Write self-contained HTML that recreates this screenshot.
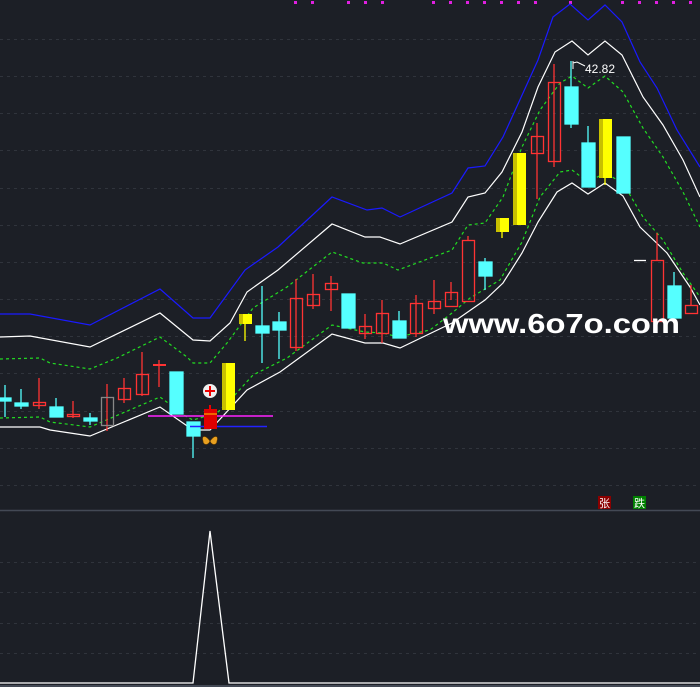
<!DOCTYPE html>
<html><head><meta charset="utf-8"><style>
html,body{margin:0;padding:0;background:#1c1f26;width:700px;height:687px;overflow:hidden}
svg{display:block}
</style></head><body>
<svg width="700" height="687" viewBox="0 0 700 687" xmlns="http://www.w3.org/2000/svg" font-family="Liberation Sans, sans-serif">
<rect width="700" height="687" fill="#1c1f26"/>
<g stroke="#30343c" stroke-width="1" stroke-dasharray="3,4">
<line x1="0" y1="39.5" x2="700" y2="39.5"/><line x1="0" y1="76.5" x2="700" y2="76.5"/><line x1="0" y1="113.5" x2="700" y2="113.5"/><line x1="0" y1="150.5" x2="700" y2="150.5"/><line x1="0" y1="188.5" x2="700" y2="188.5"/><line x1="0" y1="225.5" x2="700" y2="225.5"/><line x1="0" y1="262.5" x2="700" y2="262.5"/><line x1="0" y1="299.5" x2="700" y2="299.5"/><line x1="0" y1="336.5" x2="700" y2="336.5"/><line x1="0" y1="373.5" x2="700" y2="373.5"/><line x1="0" y1="411.5" x2="700" y2="411.5"/><line x1="0" y1="448.5" x2="700" y2="448.5"/><line x1="0" y1="485.5" x2="700" y2="485.5"/>
<line x1="0" y1="562.5" x2="700" y2="562.5"/><line x1="0" y1="592.5" x2="700" y2="592.5"/><line x1="0" y1="623.5" x2="700" y2="623.5"/><line x1="0" y1="653.5" x2="700" y2="653.5"/>
</g>
<line x1="0" y1="510.5" x2="700" y2="510.5" stroke="#434955" stroke-width="1.5"/>
<line x1="0" y1="686" x2="700" y2="686" stroke="#434955" stroke-width="2"/>
<g fill="#e020e0">
<rect x="294" y="1" width="3" height="3"/><rect x="311" y="1" width="3" height="3"/><rect x="347" y="1" width="3" height="3"/><rect x="364" y="1" width="3" height="3"/><rect x="381" y="1" width="3" height="3"/><rect x="432" y="1" width="3" height="3"/><rect x="449" y="1" width="3" height="3"/><rect x="466" y="1" width="3" height="3"/><rect x="483" y="1" width="3" height="3"/><rect x="500" y="1" width="3" height="3"/><rect x="517" y="1" width="3" height="3"/><rect x="534" y="1" width="3" height="3"/><rect x="569" y="1" width="3" height="3"/><rect x="621" y="1" width="3" height="3"/><rect x="638" y="1" width="3" height="3"/><rect x="655" y="1" width="3" height="3"/><rect x="672" y="1" width="3" height="3"/><rect x="689" y="1" width="3" height="3"/>
</g>
<g fill="none" stroke-width="1.2">
<polyline stroke="#1a1aff" points="0,314 30,314 90,325 160,289 193,318 210,318 245,270 278,247 332,197 367,210 382,208 400,217 452,193 468,168 485,166 503,137 538,60 553,17 570,4 588,20 605,5 622,22 640,62 657,88 677,130 700,167"/>
<polyline stroke="#ffffff" points="0,337 30,336 90,347 160,313 193,340 210,341 230,323 247,292 278,270 332,224 365,237 380,237 400,244 452,222 468,197 485,193 502,172 522,132 538,87 555,52 572,41 588,55 605,41 622,55 643,97 663,125 683,160 700,197"/>
<polyline stroke="#ffffff" points="0,427 40,427 50,430 90,436 160,407 193,430 210,430 247,390 280,372 332,334 365,343 383,343 400,348 452,323 485,300 503,283 522,253 538,222 557,192 572,183 588,194 605,183 623,196 640,227 667,253 690,287 700,305"/>
</g>
<g fill="none" stroke="#22dd22" stroke-width="1.2" stroke-dasharray="3,3">
<polyline points="0,359 40,358 50,363 90,369 117,358 160,337 187,357 193,363 210,363 227,343 253,308 287,287 332,252 363,263 383,263 398,270 452,250 468,225 485,223 503,197 522,147 540,110 560,83 572,76 588,88 605,76 623,92 643,128 663,157 683,192 700,227"/>
<polyline points="0,418 40,417 50,422 90,427 160,397 187,417 193,420 217,413 233,397 253,375 287,358 332,325 365,332 383,333 398,337 430,330 452,313 470,298 500,280 522,242 540,197 560,172 572,170 588,182 605,173 623,183 643,217 663,240 683,273 700,297"/>
</g>
<g stroke-width="1.3">
<g stroke="#55ffff" fill="#55ffff">
<line x1="5" y1="385" x2="5" y2="417"/><rect x="0" y="398" width="11" height="3"/>
<line x1="21" y1="389" x2="21" y2="409"/><rect x="15" y="403" width="13" height="3"/>
<line x1="56" y1="398" x2="56" y2="407"/><rect x="50" y="407" width="13" height="10"/>
<line x1="90" y1="413" x2="90" y2="425"/><rect x="84" y="418" width="13" height="3"/>
<rect x="170" y="372" width="13" height="42"/>
<line x1="193" y1="436" x2="193" y2="458"/><rect x="187" y="422" width="13" height="14"/>
<line x1="262" y1="286" x2="262" y2="363"/><rect x="256" y="326" width="13" height="7"/>
<line x1="279" y1="312" x2="279" y2="359"/><rect x="273" y="322" width="13" height="8"/>
<rect x="342" y="294" width="13" height="34"/>
<line x1="399" y1="311" x2="399" y2="321"/><rect x="393" y="321" width="13" height="17"/>
<line x1="485" y1="258" x2="485" y2="290"/><rect x="479" y="262" width="13" height="14"/>
<line x1="571" y1="61" x2="571" y2="128"/><rect x="565" y="87" width="13" height="37"/>
<line x1="588" y1="126" x2="588" y2="143"/><rect x="582" y="143" width="13" height="44"/>
<rect x="617" y="137" width="13" height="56"/>
<line x1="674" y1="272" x2="674" y2="286"/><rect x="668" y="286" width="13" height="32"/>
</g>
<g stroke="#ff3333" fill="none">
<line x1="39" y1="378" x2="39" y2="409"/><rect x="33.5" y="402.5" width="12" height="3"/>
<line x1="73" y1="401" x2="73" y2="418"/><rect x="67.5" y="414.5" width="12" height="2"/>
<line x1="107" y1="384" x2="107" y2="431"/><rect x="101.5" y="397.5" width="12" height="28" stroke="#888"/>
<line x1="124" y1="378" x2="124" y2="403"/><rect x="118.5" y="388.5" width="12" height="11"/>
<line x1="142" y1="352" x2="142" y2="396"/><rect x="136.5" y="374.5" width="12" height="20"/>
<line x1="159" y1="360" x2="159" y2="387"/><line x1="153" y1="365" x2="166" y2="365" stroke-width="2"/>
<line x1="296" y1="279" x2="296" y2="351"/><rect x="290.5" y="298.5" width="12" height="49"/>
<line x1="313" y1="274" x2="313" y2="309"/><rect x="307.5" y="294.5" width="12" height="11"/>
<line x1="331" y1="276" x2="331" y2="311"/><rect x="325.5" y="283.5" width="12" height="6"/>
<line x1="365" y1="314" x2="365" y2="339"/><rect x="359.5" y="326.5" width="12" height="7"/>
<line x1="382" y1="300" x2="382" y2="343"/><rect x="376.5" y="313.5" width="12" height="20"/>
<line x1="416" y1="295" x2="416" y2="337"/><rect x="410.5" y="303.5" width="12" height="30"/>
<line x1="434" y1="280" x2="434" y2="314"/><rect x="428.5" y="301.5" width="12" height="7"/>
<line x1="451" y1="282" x2="451" y2="300"/><rect x="445.5" y="292.5" width="12" height="14"/>
<line x1="468" y1="236" x2="468" y2="240"/><rect x="462.5" y="240.5" width="12" height="61"/>
<line x1="537" y1="123" x2="537" y2="199"/><rect x="531.5" y="136.5" width="12" height="17"/>
<line x1="554" y1="64" x2="554" y2="167"/><rect x="548.5" y="82.5" width="12" height="79"/>
<line x1="657" y1="233" x2="657" y2="260"/><rect x="651.5" y="260.5" width="12" height="61"/>
<line x1="691" y1="285" x2="691" y2="305"/><rect x="685.5" y="305.5" width="12" height="8"/>
</g>
<g stroke="none">
<rect x="222" y="363" width="13" height="47" fill="#ffff00"/><rect x="222" y="363" width="4" height="47" fill="#c8c000"/>
<line x1="245" y1="324" x2="245" y2="341" stroke="#ffff00"/><rect x="239" y="314" width="13" height="10" fill="#ffff00"/><rect x="239" y="314" width="4" height="10" fill="#c8c000"/>
<line x1="502" y1="232" x2="502" y2="238" stroke="#ffff00"/><rect x="496" y="218" width="13" height="14" fill="#ffff00"/><rect x="496" y="218" width="4" height="14" fill="#c8c000"/>
<rect x="513" y="153" width="13" height="72" fill="#ffff00"/><rect x="513" y="153" width="4" height="72" fill="#c8c000"/>
<line x1="605" y1="178" x2="605" y2="185" stroke="#ffff00"/><rect x="599" y="119" width="13" height="59" fill="#ffff00"/><rect x="599" y="119" width="4" height="59" fill="#c8c000"/>
</g>
</g>
<line x1="634" y1="260.5" x2="646" y2="260.5" stroke="#fff" stroke-width="1.3"/>
<line x1="148" y1="416" x2="273" y2="416" stroke="#ff22ff" stroke-width="1.5"/>
<line x1="190" y1="426.5" x2="267" y2="426.5" stroke="#2222ff" stroke-width="1.5"/>
<rect x="204" y="409" width="13" height="20" fill="#e00000"/><line x1="210" y1="405" x2="210" y2="409" stroke="#e00" stroke-width="2"/><line x1="204" y1="414" x2="217" y2="414" stroke="#ffcc00"/>
<circle cx="210" cy="391" r="7" fill="#eee"/><path d="M210 386v10M205 391h10" stroke="#e00" stroke-width="2"/>
<path d="M210 441 C205 434 201 436 203 441 C203 444 206 446 209 443 Z M210 441 C215 434 219 436 217 441 C217 444 214 446 211 443 Z" fill="#e8a020" stroke="#553300" stroke-width="0.6"/>
<path d="M573 61v8M573 63l4 -1 8 4" stroke="#fff" fill="none" stroke-width="1"/>
<text x="585" y="73" fill="#ffffff" font-size="12">42.82</text>
<text x="443" y="333" fill="#ffffff" font-size="28" font-weight="bold" textLength="237" lengthAdjust="spacingAndGlyphs">www.6o7o.com</text>
<rect x="598" y="496" width="13" height="13" fill="#8b0000"/><text x="604.5" y="507" fill="#fff" font-size="11" text-anchor="middle" font-family="Noto Sans CJK SC, sans-serif">张</text>
<rect x="633" y="496" width="13" height="13" fill="#008000"/><text x="639.5" y="507" fill="#fff" font-size="11" text-anchor="middle" font-family="Noto Sans CJK SC, sans-serif">跌</text>
<polyline points="0,683 193,683 210,531 229,683 700,683" fill="none" stroke="#fff" stroke-width="1.3"/>
</svg>
</body></html>
